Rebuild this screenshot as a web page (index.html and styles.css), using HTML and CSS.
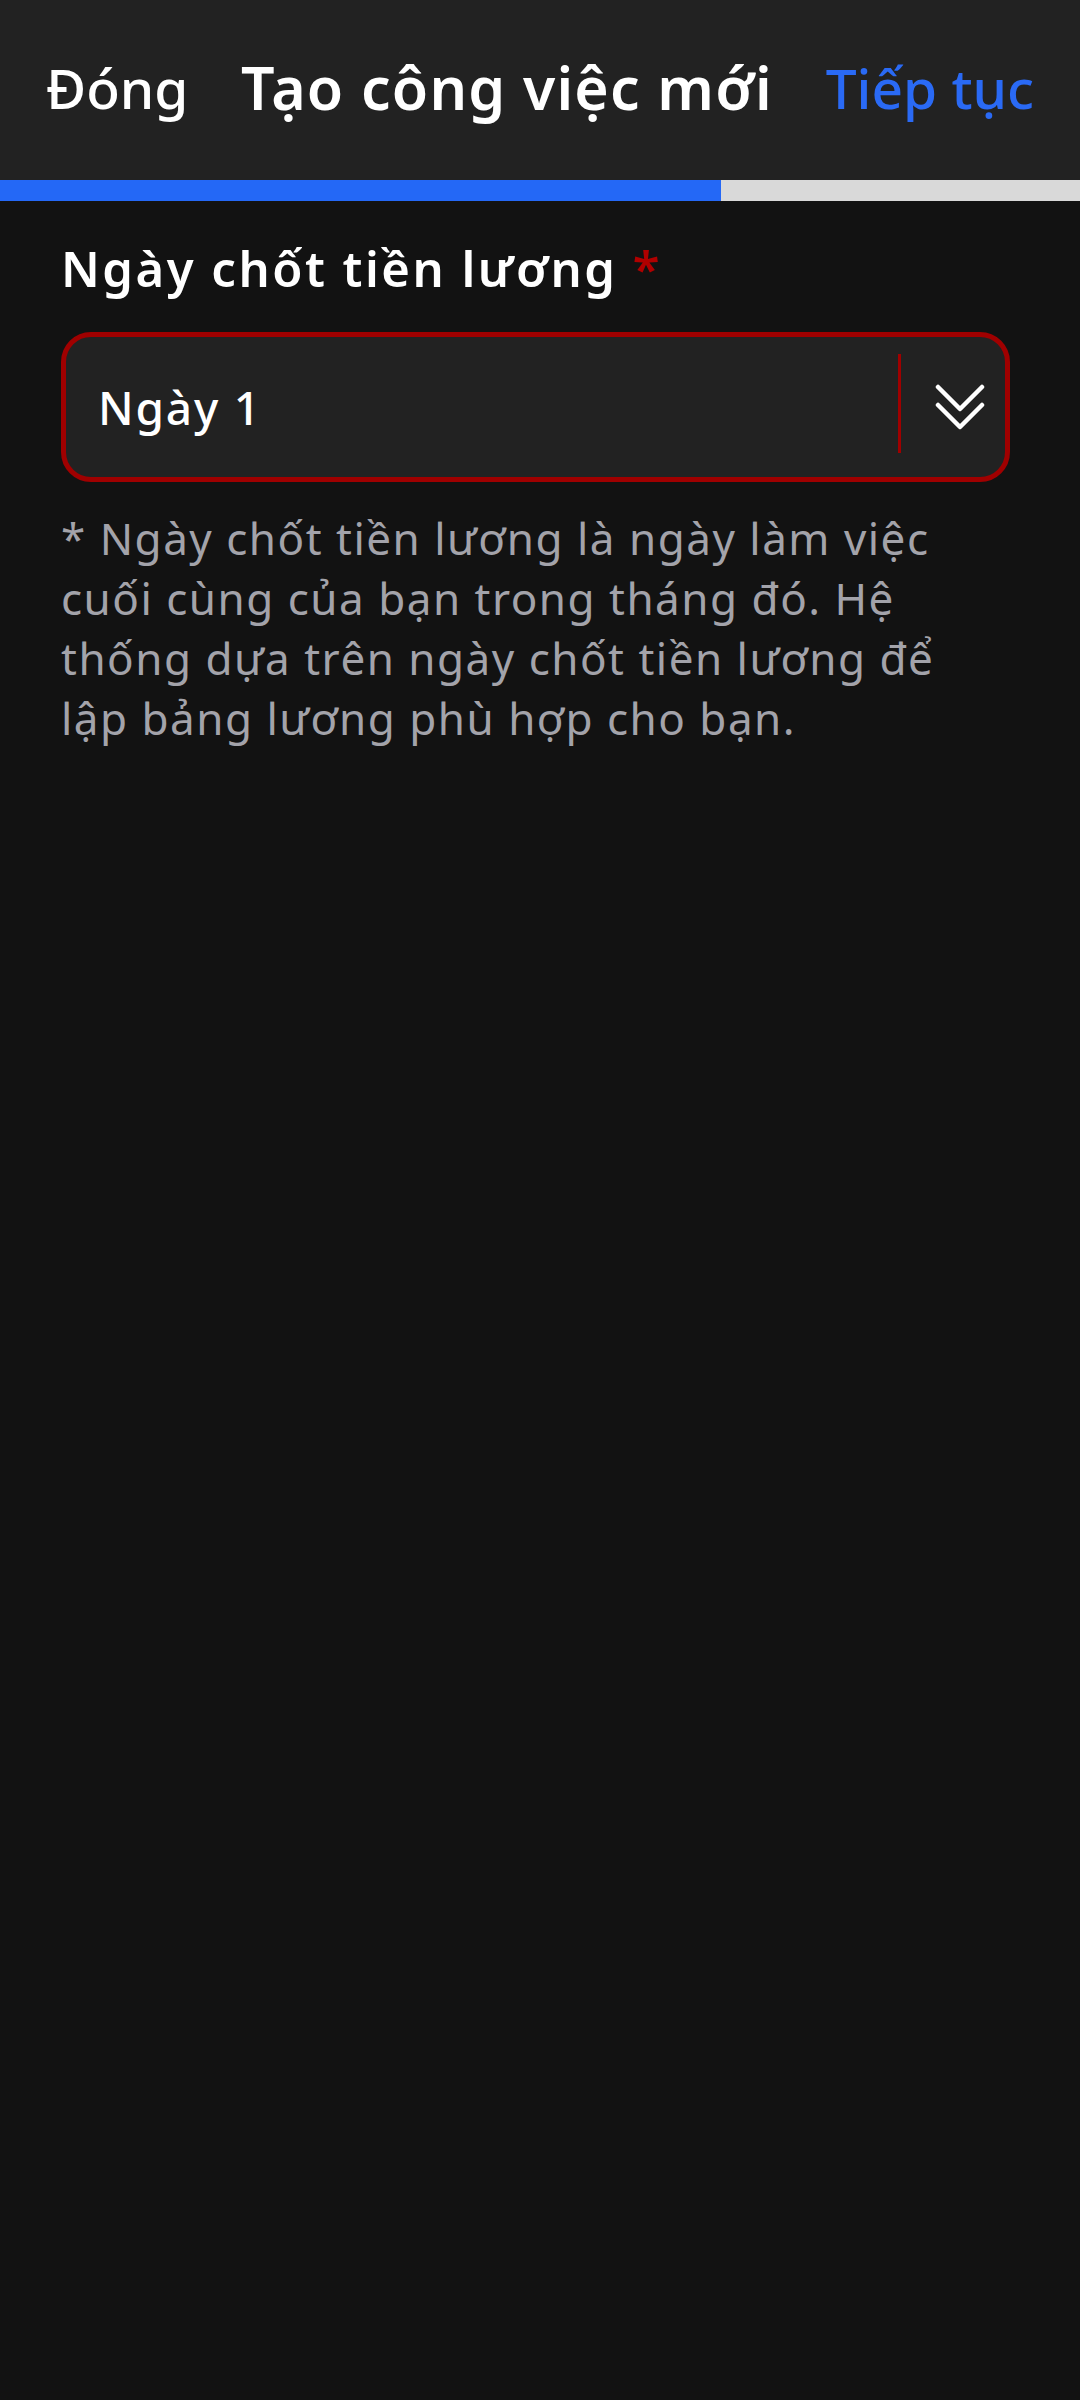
FILE: index.html
```html
<!DOCTYPE html>
<html lang="vi">
<head>
<meta charset="utf-8">
<link rel="stylesheet" href="styles.css">
</head>
<body>
<header class="topbar">
  <span class="close">Đóng</span>
  <span class="title">Tạo công việc mới</span>
  <span class="next">Tiếp tục</span>
</header>
<div class="progress"><div class="progress-fill" style="width:721px"></div></div>
<main class="content">
  <div class="label">Ngày chốt tiền lương <span class="req">*</span></div>
  <div class="select">
    <span class="value">Ngày 1</span>
    <span class="divider"></span>
    <svg class="chev" width="50" height="48" viewBox="0 0 50 48">
      <polyline points="3,4 25,26 47,4" fill="none" stroke="#fff" stroke-width="4.5" stroke-linecap="round" stroke-linejoin="round"/>
      <polyline points="3,22 25,44 47,22" fill="none" stroke="#fff" stroke-width="4.5" stroke-linecap="round" stroke-linejoin="round"/>
    </svg>
  </div>
  <p class="hint">* Ngày chốt tiền lương là ngày làm việc cuối cùng của bạn trong tháng đó. Hệ thống dựa trên ngày chốt tiền lương để lập bảng lương phù hợp cho bạn.</p>
</main>
</body>
</html>
```
FILE: styles.css
```css
html, body {
  margin: 0;
  padding: 0;
  background: #121212;
  font-family: "Noto Sans", "Open Sans", sans-serif;
}
body {
  width: 1080px;
  height: 2400px;
  overflow: hidden;
}
.topbar {
  height: 180px;
  background: #222222;
  display: flex;
  align-items: center;
  justify-content: space-between;
  padding: 0 46px 6px 46px;
  box-sizing: border-box;
}
.close {
  color: #ffffff;
  font-size: 55px;
  font-weight: 500;
}
.title {
  color: #ffffff;
  font-size: 59px;
  font-weight: 600;
  letter-spacing: 1.2px;
}
.next {
  color: #2a6af5;
  font-size: 55px;
  font-weight: 500;
}
.progress {
  height: 21px;
  background: #d9d9d9;
}
.progress-fill {
  height: 100%;
  background: #2468f6;
}
.content {
  padding: 0 61px;
  display: flex;
  flex-direction: column;
}
.label {
  margin-top: 32px;
  color: #ffffff;
  font-size: 49px;
  font-weight: 600;
  line-height: 70px;
  letter-spacing: 2.5px;
}
.req {
  color: #b00000;
}
.select {
  margin-top: 29px;
  width: 949px;
  height: 150px;
  box-sizing: border-box;
  border: 5px solid #a00000;
  border-radius: 30px;
  background: #222222;
  display: flex;
  align-items: center;
  padding: 0 20px 0 32px;
}
.value {
  flex: 1;
  color: #ffffff;
  font-size: 46px;
  font-weight: 500;
  letter-spacing: 1.8px;
}
.divider {
  width: 3px;
  height: 99px;
  background: #a00000;
  margin-right: 34px;
  margin-bottom: 8px;
}
.chev {
  display: block;
}
.hint {
  margin: 26px 0 0 0;
  width: 945px;
  color: #a3a3aa;
  font-size: 44px;
  line-height: 60px;
  letter-spacing: 1.5px;
}
```
